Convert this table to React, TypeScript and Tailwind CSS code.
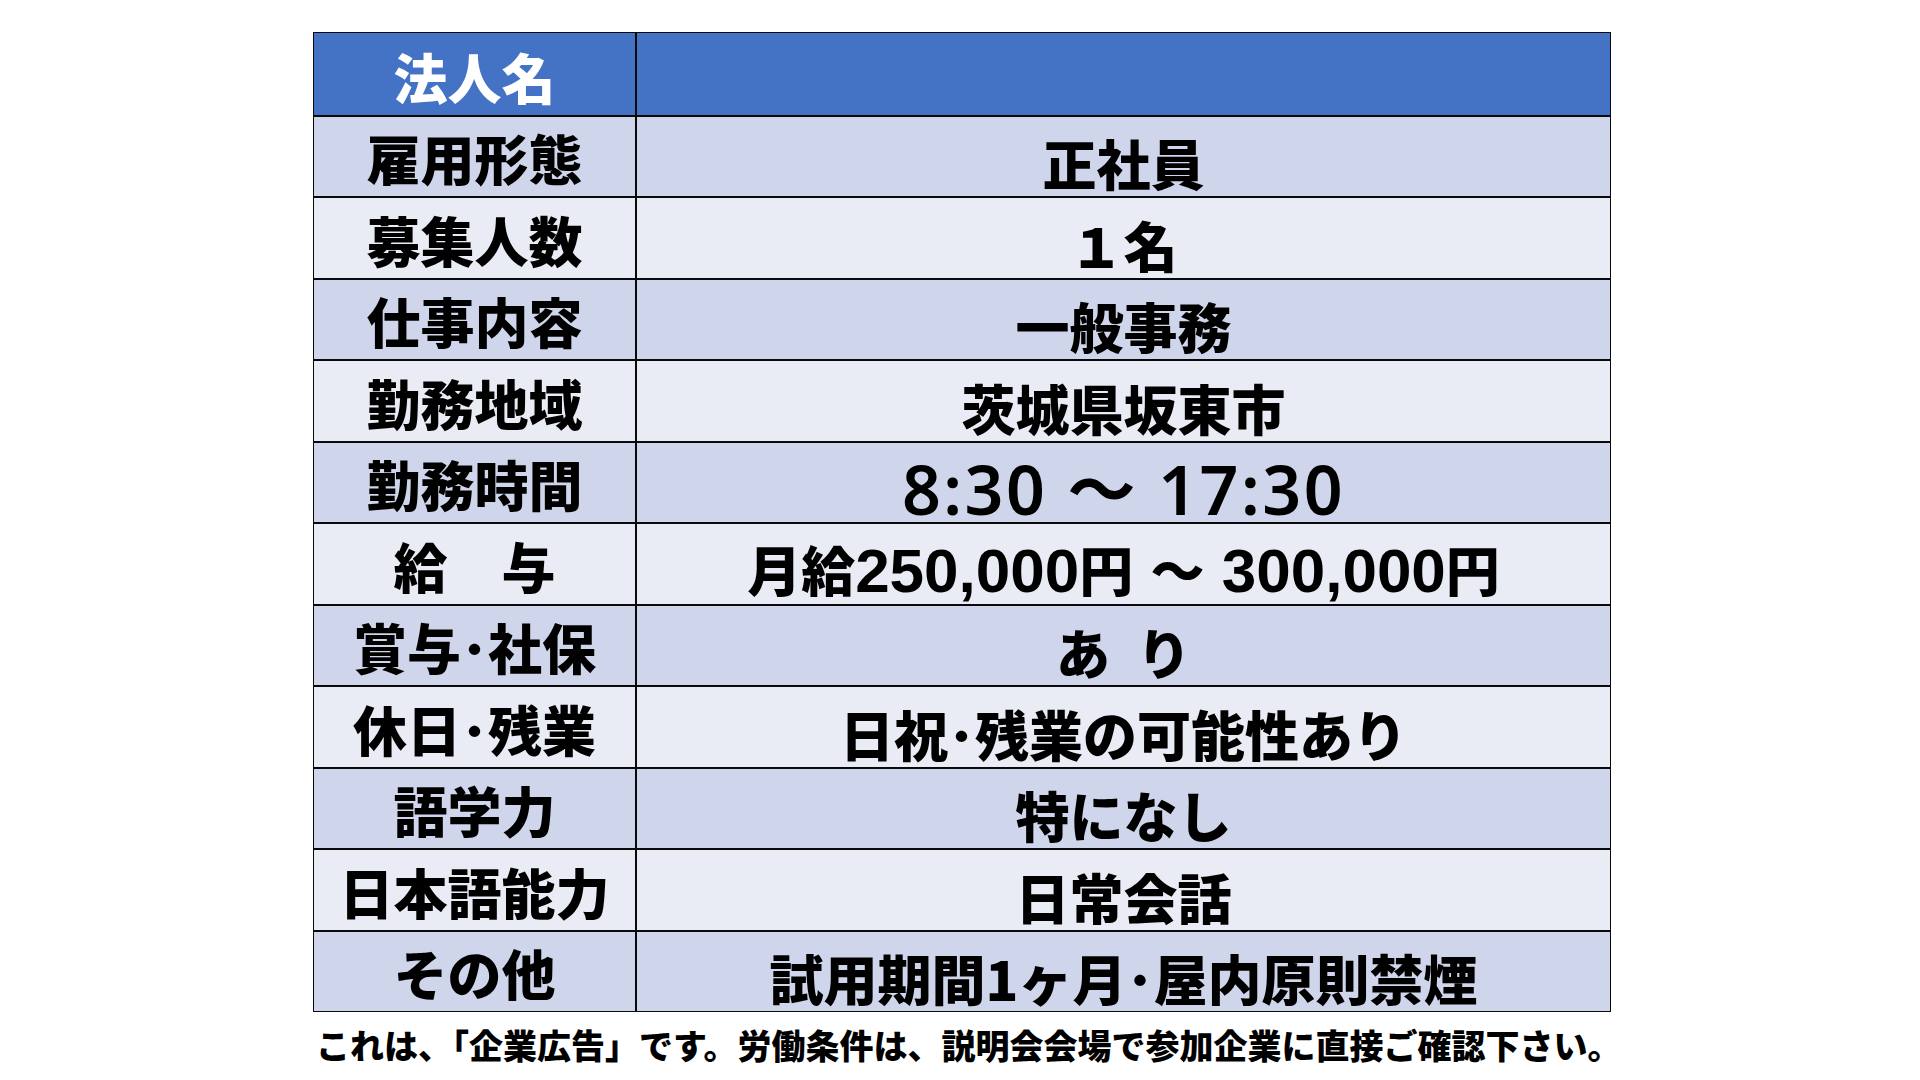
import React from "react";

type Row = {
  label: string;
  value: string;
  latin?: "time" | "pay";
};

const ROWS: Row[] = [
  { label: "雇用形態", value: "正社員" },
  { label: "募集人数", value: "１名" },
  { label: "仕事内容", value: "一般事務" },
  { label: "勤務地域", value: "茨城県坂東市" },
  { label: "勤務時間", value: "8:30 ～ 17:30", latin: "time" },
  { label: "給　与", value: "月給250,000円 ～ 300,000円", latin: "pay" },
  { label: "賞与･社保", value: "あ\u2002り" },
  { label: "休日･残業", value: "日祝･残業の可能性あり" },
  { label: "語学力", value: "特になし" },
  { label: "日本語能力", value: "日常会話" },
  { label: "その他", value: "試用期間1ヶ月･屋内原則禁煙" },
];

const CJK = "font-['Noto_Sans_CJK_JP',sans-serif]";

function ValueText({ row }: { row: Row }) {
  if (row.latin === "time") {
    return (
      <span className="font-['Noto_Sans','Noto_Sans_CJK_JP',sans-serif] text-[68px] font-semibold leading-none tracking-[2.5px]">
        {row.value}
      </span>
    );
  }
  if (row.latin === "pay") {
    const jp = `${CJK} text-[54px] font-black`;
    return (
      <span className="font-['Liberation_Sans','Noto_Sans_CJK_JP',sans-serif] text-[62px] font-bold leading-none">
        <span className={jp}>月給</span>
        250,000
        <span className={jp}>円</span>{" "}
        <span className={jp}>～</span>{" "}
        300,000
        <span className={jp}>円</span>
      </span>
    );
  }
  return <span className={`${CJK} text-[54px] font-black leading-none`}>{row.value}</span>;
}

export default function App() {
  return (
    <div className="w-[1920px] h-[1080px] bg-white pt-[32px] pl-[313px] text-black">
      <div className="w-[1298px] border-[1.5px] border-[#0a0a0a]">
        {/* header */}
        <div className="flex h-[81.5px] bg-[#4472c4]">
          <div className="w-[323px] border-r-2 border-[#0a0a0a] flex items-center justify-center pt-[6px]">
            <span className={`${CJK} text-[54px] font-black leading-none text-white`}>法人名</span>
          </div>
          <div className="flex-1" />
        </div>

        {ROWS.map((row, i) => (
          <div
            key={row.label}
            className={`flex h-[81.5px] border-t-2 border-[#0a0a0a] ${
              i % 2 === 0 ? "bg-[#cfd5ea]" : "bg-[#e9ebf5]"
            }`}
          >
            <div className="w-[323px] border-r-2 border-[#0a0a0a] flex items-center justify-center pt-[4px]">
              <span className={`${CJK} text-[54px] font-black leading-none whitespace-pre`}>{row.label}</span>
            </div>
            <div className="flex-1 flex items-center justify-center pt-[14px] whitespace-pre">
              <ValueText row={row} />
            </div>
          </div>
        ))}
      </div>

      <p className={`${CJK} mt-[16px] pl-[3px] text-[34px] font-black leading-none whitespace-nowrap`}>
        これは、「企業広告」です。労働条件は、説明会会場で参加企業に直接ご確認下さい。
      </p>
    </div>
  );
}
